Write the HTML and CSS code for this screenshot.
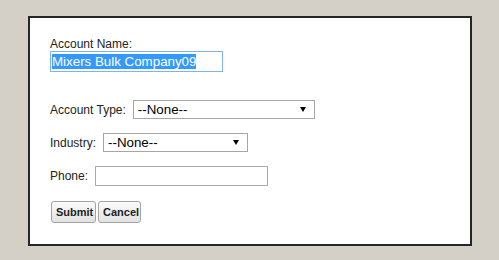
FILE: index.html
```html
<!DOCTYPE html>
<html lang="en">
<head>
    <meta charset="UTF-8">
    <title>New Account</title>
    <link rel="stylesheet" href="styles.css">
</head>
<body>
    <div class="panel">
        <form class="account-form" onsubmit="return false;">
            <!-- Account name, selected on load -->
            <label class="name-label" for="accountName">Account Name:</label>
            <input type="text" id="accountName" class="text-box name-box" value="Mixers Bulk Company09">

            <div class="row row-type">
                <label for="accountType">Account Type:</label>
                <span class="select-wrap">
                    <select id="accountType" class="type-select">
                        <option>--None--</option>
                        <option>Customer</option>
                        <option>Partner</option>
                    </select>
                </span>
            </div>

            <div class="row row-industry">
                <label for="industry">Industry:</label>
                <span class="select-wrap">
                    <select id="industry" class="industry-select">
                        <option>--None--</option>
                        <option>Manufacturing</option>
                        <option>Retail</option>
                    </select>
                </span>
            </div>

            <div class="row row-phone">
                <label for="phone">Phone:</label>
                <input type="text" id="phone" class="text-box phone-box">
            </div>

            <div class="buttons">
                <button type="submit" class="btn btn-submit">Submit</button>
                <button type="button" class="btn btn-cancel">Cancel</button>
            </div>
        </form>
    </div>
    <script>
        // Select the account name so it can be typed over
        var nameBox = document.getElementById('accountName');
        nameBox.focus();
        nameBox.select();
    </script>
</body>
</html>
```

FILE: styles.css
```css
/* Page */
body {
    margin: 0;
    background-color: #d4d0c8;
    font-family: 'Liberation Sans', Arial, sans-serif;
    color: #222;
}

/* White box with dark frame */
.panel {
    box-sizing: border-box;
    width: 444px;
    height: 230px;
    margin: 16px 0 0 28px;
    padding: 19px 20px;
    background-color: #fff;
    border: 2px solid #262626;
}

.account-form {
    display: flex;
    flex-direction: column;
    align-items: flex-start;
}

label {
    font-size: 12px;
    line-height: 14px;
}

.name-label {
    display: block;
}

/* Text inputs */
.text-box {
    box-sizing: border-box;
    width: 173px;
    margin: 0;
    padding: 0 1px;
    border: 1px solid #a9a9a9;
    font-family: 'Liberation Sans', Arial, sans-serif;
    font-size: 13.33px;
    color: #000;
    background: #fff;
    outline: none;
}
.name-box {
    height: 21px;
    border-color: #7eb4ea;
}
.name-box::selection {
    background-color: #3399ff;
    color: #fff;
}
.phone-box {
    height: 20px;
}

/* Label + control rows */
.row {
    display: flex;
    align-items: center;
    gap: 7px;
}
.row-type {
    margin-top: 28px;
}
.row-industry {
    margin-top: 14px;
}
.row-phone {
    margin-top: 14px;
}

/* Dropdowns with a small black arrow */
.select-wrap {
    position: relative;
    display: inline-block;
}
.select-wrap::after {
    content: "";
    position: absolute;
    right: 9px;
    top: 7px;
    border-left: 3px solid transparent;
    border-right: 3px solid transparent;
    border-top: 5px solid #000;
    pointer-events: none;
}
select {
    -webkit-appearance: none;
    appearance: none;
    box-sizing: border-box;
    height: 19px;
    margin: 0;
    padding: 0 0 0 4px;
    border: 1px solid #a6a6a6;
    border-radius: 0;
    background: #fff;
    font-family: 'Liberation Sans', Arial, sans-serif;
    font-size: 13.33px;
    color: #000;
    outline: none;
}
.type-select {
    width: 182px;
}
.industry-select {
    width: 145px;
}

/* Buttons */
.buttons {
    display: flex;
    gap: 2px;
    margin-top: 15px;
    margin-left: 1px;
}
.btn {
    box-sizing: border-box;
    height: 22px;
    margin: 0;
    padding: 0 4px;
    border: 1px solid #a3a3a3;
    border-radius: 3px;
    background: linear-gradient(#fbfbfb, #e2e2e2);
    font-family: 'Liberation Sans', Arial, sans-serif;
    font-size: 11px;
    font-weight: bold;
    color: #222;
}
.btn-submit {
    width: 45px;
}
.btn-cancel {
    width: 43px;
}
```
